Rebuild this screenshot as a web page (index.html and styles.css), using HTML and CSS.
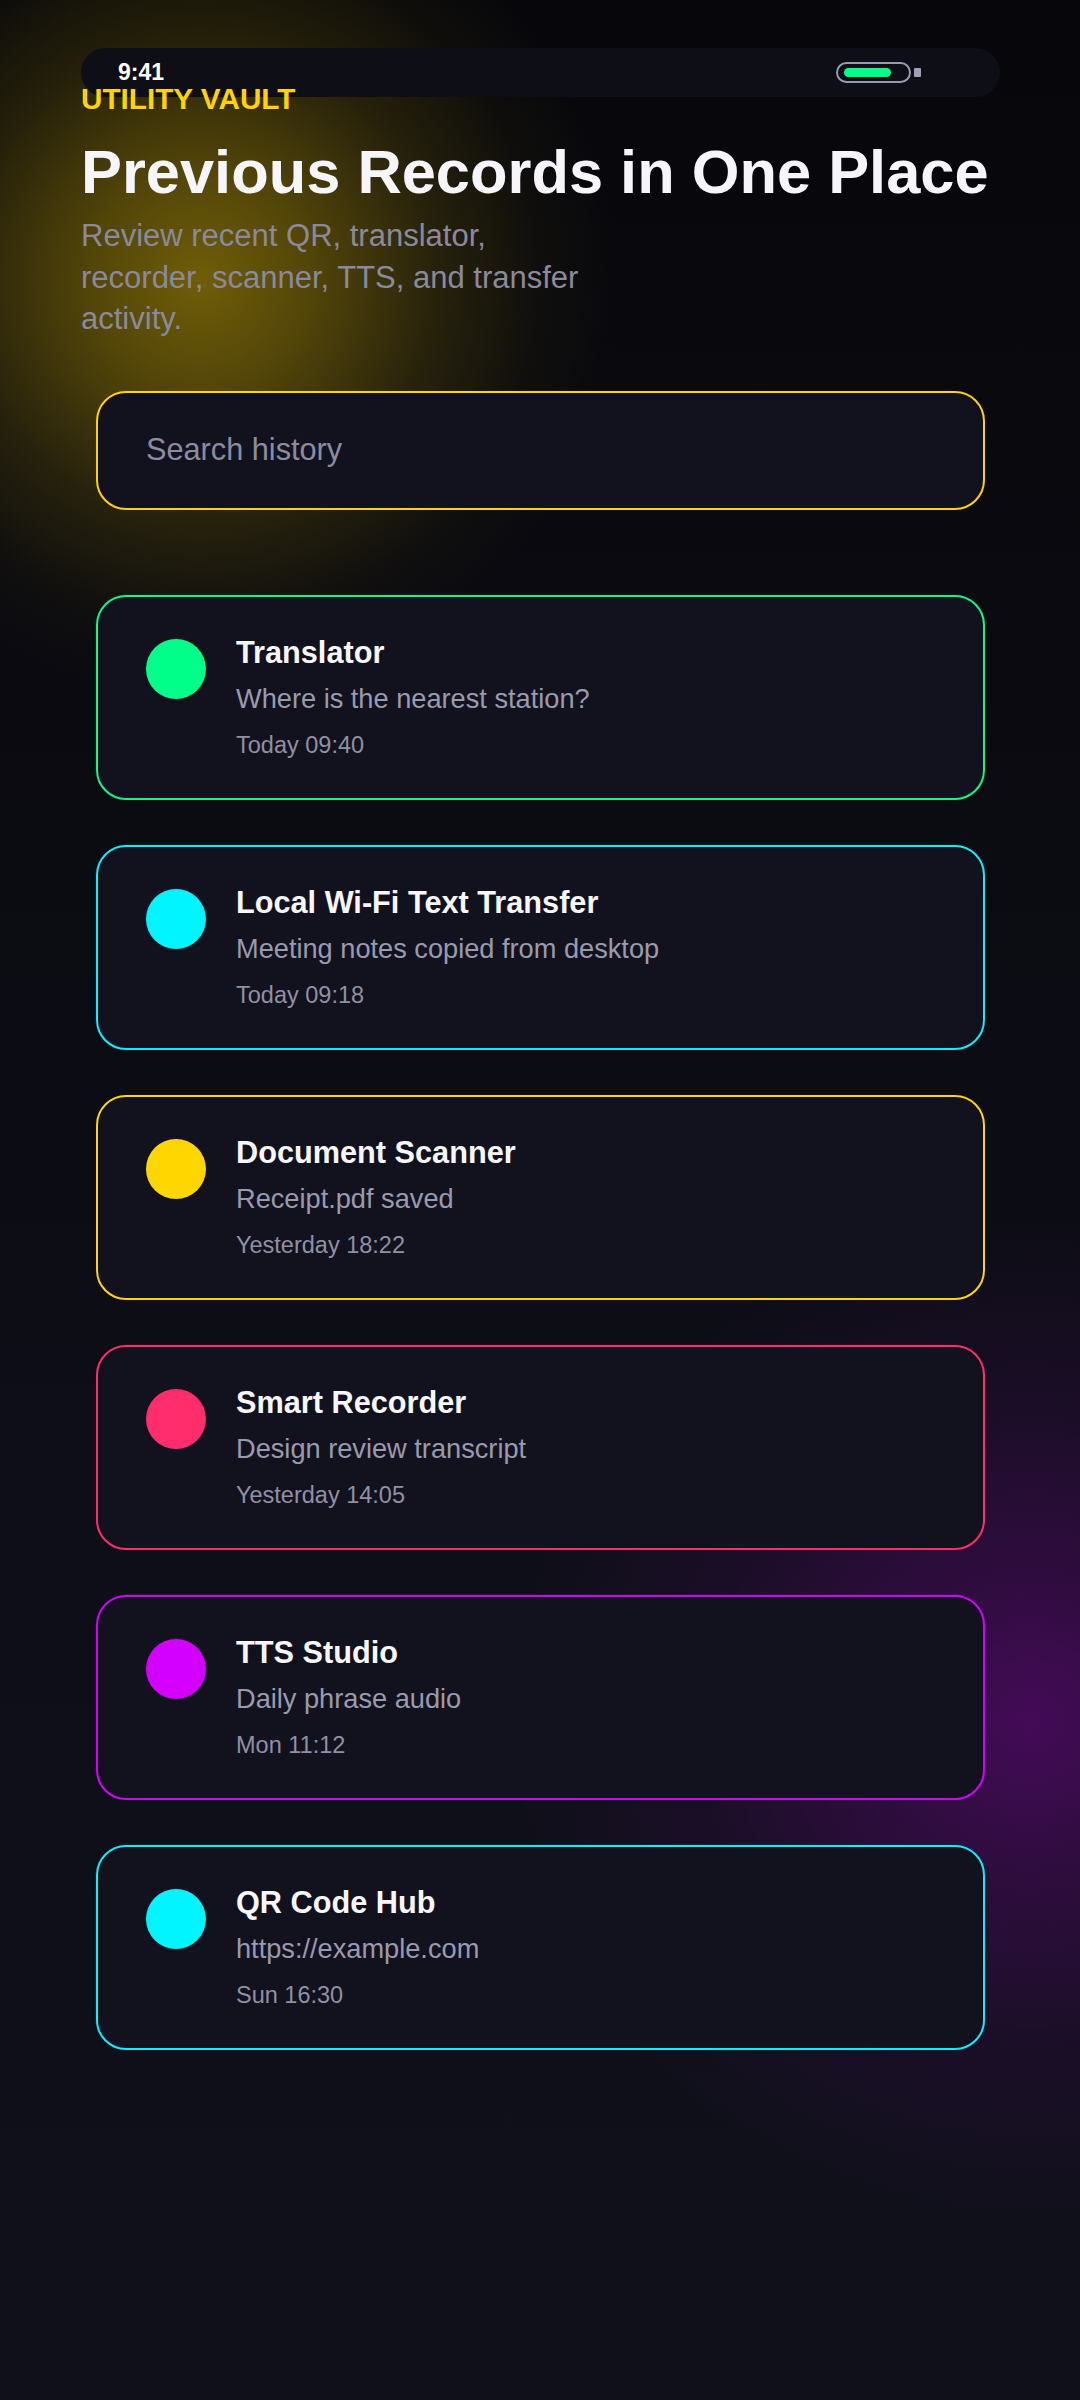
FILE: index.html
```html
<!DOCTYPE html>
<html lang="en">
<head>
<meta charset="utf-8">
<meta name="viewport" content="width=1080">
<title>Utility Vault – History</title>
<link rel="stylesheet" href="styles.css">
</head>
<body>
<div class="page">
  <div class="statusbar">
    <span class="statusbar__time">9:41</span>
    <div class="battery" aria-label="Battery">
      <span class="battery__body"><span class="battery__level"></span></span>
      <span class="battery__cap"></span>
    </div>
  </div>

  <header class="intro">
    <p class="intro__brand">UTILITY VAULT</p>
    <h1 class="intro__title">Previous Records in One Place</h1>
    <p class="intro__lead">Review recent QR, translator, recorder, scanner, TTS, and transfer activity.</p>
  </header>

  <div class="search">
    <input class="search__input" type="text" placeholder="Search history">
  </div>

  <ul class="records">
    <li class="record record--green">
      <span class="record__dot"></span>
      <div class="record__body">
        <p class="record__title">Translator</p>
        <p class="record__detail">Where is the nearest station?</p>
        <p class="record__time">Today 09:40</p>
      </div>
    </li>
    <li class="record record--cyan">
      <span class="record__dot"></span>
      <div class="record__body">
        <p class="record__title">Local Wi-Fi Text Transfer</p>
        <p class="record__detail">Meeting notes copied from desktop</p>
        <p class="record__time">Today 09:18</p>
      </div>
    </li>
    <li class="record record--yellow">
      <span class="record__dot"></span>
      <div class="record__body">
        <p class="record__title">Document Scanner</p>
        <p class="record__detail">Receipt.pdf saved</p>
        <p class="record__time">Yesterday 18:22</p>
      </div>
    </li>
    <li class="record record--pink">
      <span class="record__dot"></span>
      <div class="record__body">
        <p class="record__title">Smart Recorder</p>
        <p class="record__detail">Design review transcript</p>
        <p class="record__time">Yesterday 14:05</p>
      </div>
    </li>
    <li class="record record--purple">
      <span class="record__dot"></span>
      <div class="record__body">
        <p class="record__title">TTS Studio</p>
        <p class="record__detail">Daily phrase audio</p>
        <p class="record__time">Mon 11:12</p>
      </div>
    </li>
    <li class="record record--cyan">
      <span class="record__dot"></span>
      <div class="record__body">
        <p class="record__title">QR Code Hub</p>
        <p class="record__detail">https://example.com</p>
        <p class="record__time">Sun 16:30</p>
      </div>
    </li>
  </ul>
</div>
</body>
</html>
```

FILE: styles.css
```css
* {
  box-sizing: border-box;
}

html {
  background: #0a0a11;
}

body {
  margin: 0;
  min-height: 2400px;
  font-family: "Liberation Sans", Arial, sans-serif;
  color: #f5f5fa;
  background:
    radial-gradient(circle at 200px 280px,
      rgba(255, 212, 0, 0.42) 0,
      rgba(255, 212, 0, 0.30) 110px,
      rgba(255, 212, 0, 0.12) 240px,
      rgba(255, 212, 0, 0.03) 340px,
      rgba(255, 212, 0, 0) 420px),
    radial-gradient(ellipse 520px 500px at 1030px 1720px,
      rgba(212, 0, 255, 0.27) 0,
      rgba(212, 0, 255, 0.16) 30%,
      rgba(212, 0, 255, 0.06) 65%,
      rgba(212, 0, 255, 0) 100%),
    linear-gradient(180deg, #07070b 0%, #0a0a10 30%, #0e0e18 60%, #10101b 100%);
}

.page {
  padding: 48px 80px 0 81px;
}

/* status bar */
.statusbar {
  height: 49px;
  margin-bottom: -16px;
  padding: 0 79px 0 37px;
  display: flex;
  align-items: center;
  justify-content: space-between;
  background: #0d0e16;
  border-radius: 25px;
}

.statusbar__time {
  font-size: 23px;
  line-height: 23px;
  font-weight: 700;
  color: #ffffff;
}

.battery {
  display: flex;
  align-items: center;
}

.battery__body {
  display: block;
  width: 75px;
  height: 21px;
  padding: 4px 6px;
  border: 2px solid #9a9aae;
  border-radius: 11px;
}

.battery__level {
  display: block;
  width: 47px;
  height: 9px;
  border-radius: 5px;
  background: #00ff88;
}

.battery__cap {
  display: block;
  width: 7px;
  height: 9px;
  margin-left: 3px;
  border-radius: 1px;
  background: #a0a0b4;
}

/* intro */
.intro__brand {
  margin: 0;
  font-size: 29.7px;
  line-height: 36px;
  font-weight: 700;
  color: #ffd400;
}

.intro__title {
  margin: 18px 0 0;
  font-size: 61.4px;
  line-height: 73px;
  font-weight: 700;
  color: #f5f5fa;
  white-space: nowrap;
}

.intro__lead {
  margin: 7px 0 0;
  max-width: 520px;
  font-size: 31px;
  line-height: 41.7px;
  color: #8a8a9c;
}

/* search */
.search {
  margin: 51px 15px 0;
}

.search__input {
  display: block;
  width: 100%;
  height: 119px;
  margin: 0;
  padding: 0 48px 2px;
  border: 2px solid #ffd400;
  border-radius: 30px;
  background: #12121f;
  font-family: "Liberation Sans", Arial, sans-serif;
  font-size: 30.7px;
  color: #e8e8f0;
  outline: none;
}

.search__input::placeholder {
  color: #8c8ca0;
  opacity: 1;
}

/* records */
.records {
  list-style: none;
  margin: 85px 15px 0;
  padding: 0;
  display: flex;
  flex-direction: column;
  gap: 45px;
}

.record {
  --accent: #00ff88;
  display: flex;
  align-items: flex-start;
  gap: 30px;
  padding: 37px 48px;
  border: 2px solid var(--accent);
  border-radius: 30px;
  background: #12121f;
}

.record--green { --accent: #00ff88; }
.record--cyan { --accent: #00f5ff; }
.record--yellow { --accent: #ffd600; }
.record--pink { --accent: #ff2d6b; }
.record--purple { --accent: #d400ff; }

.record__dot {
  flex-shrink: 0;
  width: 60px;
  height: 60px;
  margin-top: 5px;
  border-radius: 50%;
  background: var(--accent);
}

.record__body {
  min-width: 0;
}

.record__title {
  margin: 0;
  font-size: 30.7px;
  line-height: 37px;
  font-weight: 700;
  color: #f7f7fb;
}

.record__detail {
  margin: 9px 0 0;
  font-size: 27.2px;
  line-height: 37px;
  color: #9a9aae;
}

.record__time {
  margin: 12px 0 0;
  font-size: 23.5px;
  line-height: 32px;
  color: #9090a4;
}
```
